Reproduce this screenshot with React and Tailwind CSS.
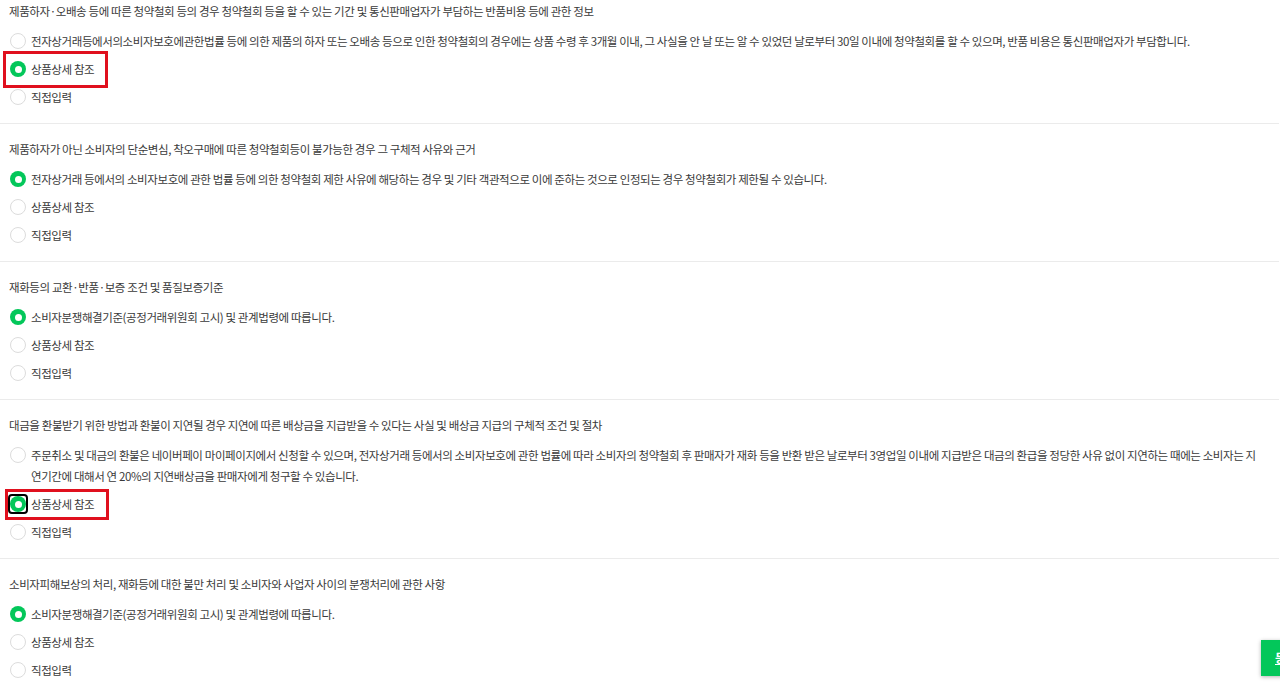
import React from 'react';

const sections = [
  {
    title: '제품하자·오배송 등에 따른 청약철회 등의 경우 청약철회 등을 할 수 있는 기간 및 통신판매업자가 부담하는 반품비용 등에 관한 정보',
    first: '전자상거래등에서의소비자보호에관한법률 등에 의한 제품의 하자 또는 오배송 등으로 인한 청약철회의 경우에는 상품 수령 후 3개월 이내, 그 사실을 안 날 또는 알 수 있었던 날로부터 30일 이내에 청약철회를 할 수 있으며, 반품 비용은 통신판매업자가 부담합니다.',
    checked: 1,
    mark: 'top',
  },
  {
    title: '제품하자가 아닌 소비자의 단순변심, 착오구매에 따른 청약철회등이 불가능한 경우 그 구체적 사유와 근거',
    first: '전자상거래 등에서의 소비자보호에 관한 법률 등에 의한 청약철회 제한 사유에 해당하는 경우 및 기타 객관적으로 이에 준하는 것으로 인정되는 경우 청약철회가 제한될 수 있습니다.',
    checked: 0,
  },
  {
    title: '재화등의 교환·반품·보증 조건 및 품질보증기준',
    first: '소비자분쟁해결기준(공정거래위원회 고시) 및 관계법령에 따릅니다.',
    checked: 0,
  },
  {
    title: '대금을 환불받기 위한 방법과 환불이 지연될 경우 지연에 따른 배상금을 지급받을 수 있다는 사실 및 배상금 지급의 구체적 조건 및 절차',
    first: (
      <>
        주문취소 및 대금의 환불은 네이버페이 마이페이지에서 신청할 수 있으며, 전자상거래 등에서의 소비자보호에 관한 법률에 따라 소비자의 청약철회 후 판매자가 재화 등을 반환 받은 날로부터 3영업일 이내에 지급받은 대금의 환급을 정당한 사유 없이 지연하는 때에는 소비자는 지
        <br />
        연기간에 대해서 연 20%의 지연배상금을 판매자에게 청구할 수 있습니다.
      </>
    ),
    checked: 1,
    mark: 'bottom',
    focus: true,
  },
  {
    title: '소비자피해보상의 처리, 재화등에 대한 불만 처리 및 소비자와 사업자 사이의 분쟁처리에 관한 사항',
    first: '소비자분쟁해결기준(공정거래위원회 고시) 및 관계법령에 따릅니다.',
    checked: 0,
  },
];

const Radio = ({ on, focus }) => (
  <span
    className={
      'relative mt-[2.5px] flex h-4 w-4 flex-shrink-0 items-center justify-center rounded-full ' +
      (on ? 'bg-[#03c75a]' : 'border border-[#dcdcdc] bg-white')
    }
  >
    {on && <span className="h-[7px] w-[7px] rounded-full bg-white" />}
    {focus && <span className="absolute -inset-[2px] rounded-[4px] border-2 border-black" />}
  </span>
);

const Option = ({ on, focus, mark, children }) => (
  <label className="relative flex items-start gap-[5px] py-[3.5px] pl-[10px] leading-[21px]">
    <Radio on={on} focus={focus} />
    <span className="whitespace-nowrap">{children}</span>
    {/* red annotation boxes from the screenshot */}
    {mark === 'top' && (
      <span className="pointer-events-none absolute left-[3px] top-[-4px] h-[37px] w-[105px] border-[3px] border-[#e0101e]" />
    )}
    {mark === 'bottom' && (
      <span className="pointer-events-none absolute left-[5px] top-[-1px] h-[31px] w-[104px] border-[3px] border-[#e0101e]" />
    )}
  </label>
);

export default function App() {
  return (
    <div
      className="relative h-[686px] overflow-hidden bg-white text-[11.5px] tracking-[-0.035em] text-[#3a3a3a]"
      style={{ fontFamily: '"Noto Sans CJK KR", "Noto Sans", sans-serif' }}
    >
      <div className="-mt-[14px] pr-[1px]">
        {sections.map((s, i) => (
          <div key={i} className="border-b border-[#ebebeb] pb-[12px] pt-[16px]">
            <p className="pl-[9px] leading-[18px]">{s.title}</p>
            <div className="mt-[7px]">
              <Option on={s.checked === 0}>{s.first}</Option>
              <Option on={s.checked === 1} focus={s.focus} mark={s.mark}>상품상세 참조</Option>
              <Option on={false}>직접입력</Option>
            </div>
          </div>
        ))}
      </div>
      <button className="absolute left-[1261px] top-[640px] h-[36px] w-[80px] bg-[#03c75a] pl-[14px] text-left text-[12px] font-bold text-white underline shadow-[0_1px_4px_rgba(0,0,0,0.3)]">
        등록
      </button>
    </div>
  );
}
